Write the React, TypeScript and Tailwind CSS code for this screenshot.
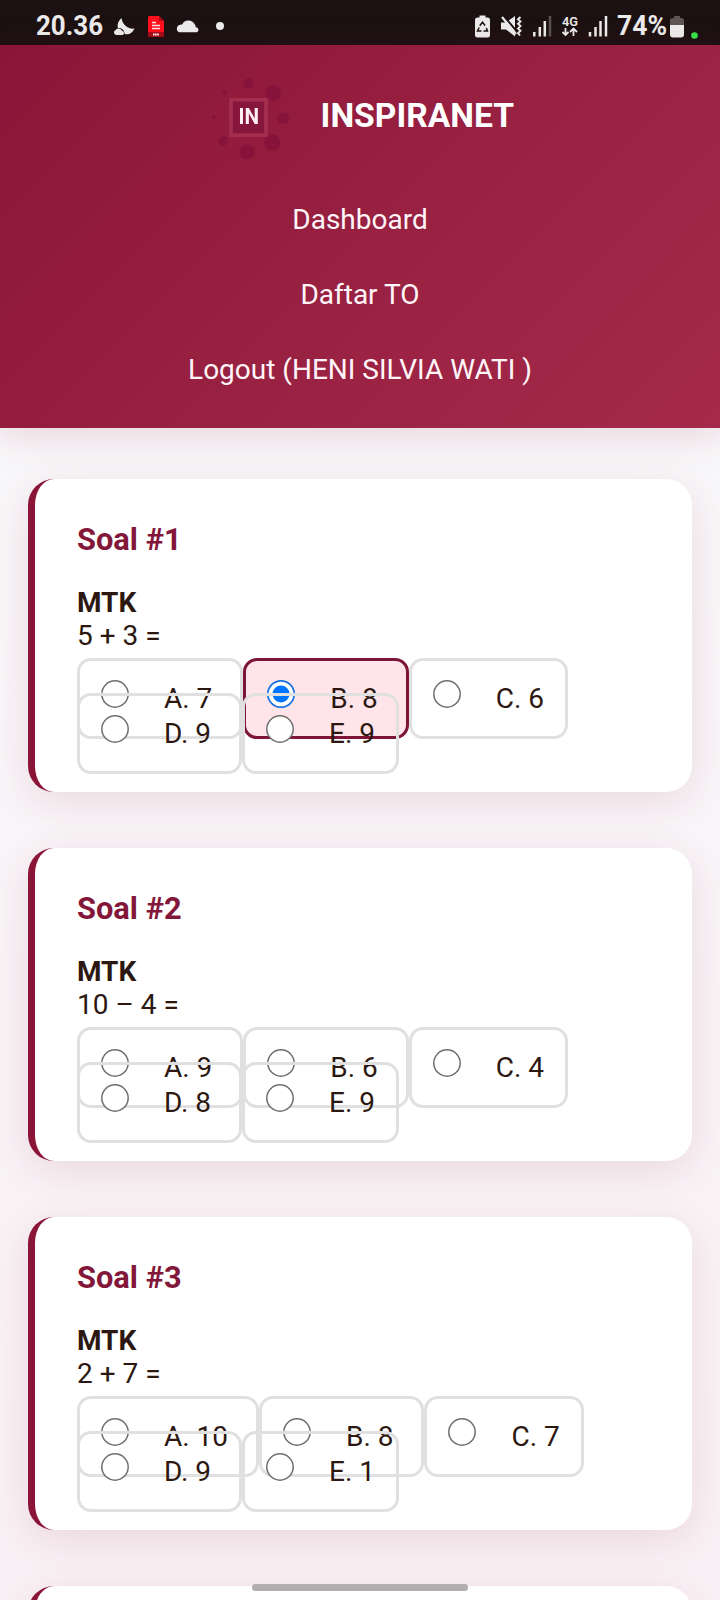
type Question = { id: number; text: string; options: string[]; selected?: number };

const questions: Question[] = [
  { id: 1, text: '5 + 3 =', options: ['A. 7', 'B. 8', 'C. 6', 'D. 9', 'E. 9'], selected: 1 },
  { id: 2, text: '10 – 4 =', options: ['A. 9', 'B. 6', 'C. 4', 'D. 8', 'E. 9'] },
  { id: 3, text: '2 + 7 =', options: ['A. 10', 'B. 8', 'C. 7', 'D. 9', 'E. 1'] },
];

function StatusBar() {
  return (
    <div className="flex h-[45px] shrink-0 items-start bg-[#1c1112] text-[#ececec]">
      <svg width="240" height="45" viewBox="0 0 240 45" className="shrink-0">
        <text x="36" y="35" fontSize="27" fontWeight="700" fill="#ececec" textLength="67" lengthAdjust="spacingAndGlyphs">20.36</text>
        <path d="M121.500 18 C118 21 117 25 118 28 C121.500 27.500 124.500 30 124.500 33.800 C128.500 35.500 132.500 33 134.500 28.500 C130 29.500 122.500 26 121.500 18Z" fill="#ececec" />
        <path d="M116 34.900 a2.600 2.600 0 0 1 -.3 -5 a3.600 3.600 0 0 1 6.200 .9 a2.200 2.200 0 0 1 1 4.100Z" fill="#ececec" />
        <path d="M149.500 16 h9.500 l5 5 v15 q0 1 -1 1 h-14 q-1 0 -1 -1 v-18.500 q0 -1.500 1.500 -1.500Z" fill="#fb101c" />
        <path d="M159 16 l5 5 h-5Z M148 32 h16 v4 q0 1 -1 1 h-14 q-1 0 -1 -1Z" fill="#a90d16" />
        <path d="M152 22.500 h4 M152 25.500 h8 M152 28.500 h8" stroke="#ffe1e1" strokeWidth="1.400" />
        <path d="M153 34.500 h6" stroke="#fff" strokeWidth="2" strokeDasharray="1.600 .5" />
        <path d="M179 32.300 a4 4 0 0 1 -.3 -7 q1.800 -1.200 3.500 -.8 a6.900 6.900 0 0 1 12.300 -.5 q1.300 1.500 1.300 3.200 a2.700 2.700 0 0 1 1.200 5.100Z" fill="#ececec" />
        <circle cx="220" cy="26" r="4" fill="#ececec" />
      </svg>
      <div className="flex-1" />
      <svg width="260" height="45" viewBox="0 0 260 45" className="shrink-0">
        <path d="M19.500 15.500 h6 v2 h2 q2.500 0 2.500 2.500 v15 q0 2.500 -2.500 2.500 h-10 q-2.500 0 -2.500 -2.500 v-15 q0 -2.500 2.500 -2.500 h2Z" fill="#ececec" />
        <path d="M19.700 25.700 l2.800 -3.500 l2.600 3.300 M26.300 28 l1.200 3 h-4 M21.500 31 h-4 l1.700 -3.500" fill="none" stroke="#1c1112" strokeWidth="1.500" />
        <path d="M41 22.500 h5 l9 -6.500 v20.500 l-9 -7 h-5Z" fill="#ececec" />
        <path d="M43 15 L58 33" stroke="#1c1112" strokeWidth="2" />
        <path d="M42 17 L56 34" stroke="#ececec" strokeWidth="2.200" />
        <path d="M60.500 17 l-2.500 2.200 l2.500 2.300 l-2.500 2.300 l2.500 2.300 l-2.500 2.300 l2.500 2.300 l-2.500 2.300 l2 2.500" fill="none" stroke="#ececec" strokeWidth="1.900" />
        <path d="M74.300 32 v4.500 M79.800 27 v9.500 M84.800 21 v15.500" stroke="#ececec" strokeWidth="2.500" />
        <path d="M90 16 v20.500" stroke="#5b5253" strokeWidth="2.500" />
        <text x="102" y="25.500" fontSize="13" fontWeight="600" fill="#ececec" textLength="16" lengthAdjust="spacingAndGlyphs">4G</text>
        <path d="M105.500 28 v7 M102.500 32 l3 3 l3 -3 M113.500 36 v-7 M110 32 l3.500 -3.500 l3.500 3.500" fill="none" stroke="#ececec" strokeWidth="1.800" />
        <path d="M130 32 v4.500 M135.500 27 v9.500 M140.500 21 v15.500 M146 16 v20.500" stroke="#ececec" strokeWidth="2.500" />
        <text x="157" y="35" fontSize="27" fontWeight="700" fill="#ececec" textLength="50" lengthAdjust="spacingAndGlyphs">74%</text>
        <path d="M214 16 h6 v2 h1.500 q2.500 0 2.500 2.500 v4.500 h-14 v-4.500 q0 -2.500 2.500 -2.500 h1.500Z" fill="#5f5556" />
        <path d="M210 25 h14 v9.500 q0 3 -3 3 h-8 q-3 0 -3 -3Z" fill="#ececec" />
        <circle cx="234.500" cy="35.500" r="3.300" fill="#36e84d" />
      </svg>
    </div>
  );
}

function Logo() {
  return (
    <svg width="84" height="84" viewBox="0 0 84 84">
      <defs>
        <filter id="soft" x="-10%" y="-10%" width="120%" height="120%">
          <feGaussianBlur stdDeviation="0.7" />
        </filter>
        <filter id="softText" x="-10%" y="-10%" width="120%" height="120%">
          <feGaussianBlur stdDeviation="0.6" />
        </filter>
      </defs>
      <g filter="url(#soft)">
        <g fill="#83133a" opacity="0.75">
          <circle cx="41.500" cy="7.500" r="5.300" />
          <circle cx="66.500" cy="18" r="8" />
          <circle cx="76.500" cy="43" r="6" />
          <circle cx="65.500" cy="68" r="8.500" />
          <circle cx="40" cy="77.500" r="7.800" />
          <circle cx="15.500" cy="66.500" r="4.800" />
          <circle cx="6" cy="42" r="2" />
          <circle cx="16.500" cy="17.500" r="2.500" />
        </g>
        <rect x="23.500" y="24.500" width="35.500" height="36" fill="#86143a" stroke="#a32e4e" strokeWidth="3.800" />
      </g>
      <text x="31" y="49.500" fontSize="22.500" fontWeight="700" fill="#fdeef3" textLength="21" lengthAdjust="spacingAndGlyphs" filter="url(#softText)">IN</text>
    </svg>
  );
}

function Radio({ checked }: { checked?: boolean }) {
  return (
    <svg width="28" height="28" viewBox="0 0 28 28" className="shrink-0">
      <circle cx="14" cy="14" r="13.200" fill="#fff" stroke={checked ? '#1672e0' : '#6f6f6f'} strokeWidth={checked ? 1.7 : 1.5} />
      {checked && <circle cx="14" cy="14" r="8.500" fill="#0075ff" />}
    </svg>
  );
}

function Option({ label, checked, last }: { label: string; checked?: boolean; last?: boolean }) {
  return (
    <label
      className={`relative flex h-[81px] items-start rounded-[14px] border-3 px-[21px] pt-[19px] whitespace-pre ${
        checked ? 'border-[#7d1538] bg-[#ffe5ea]' : 'border-[#e0e0e0]'
      }`}
    >
      <Radio checked={checked} />
      <span className="mt-[2px] ml-[35px] leading-[33px]">{last ? label : label + '\u00a0'}</span>
    </label>
  );
}

function Card({ q }: { q: Question }) {
  return (
    <section className="h-[313px] shrink-0 rounded-[26px] border-l-7 border-[#8b1538] bg-white pt-[43px] pl-[42px] shadow-[0_10px_42px_rgba(139,21,56,0.12)]">
      <h2 className="mb-[28px] text-[30.8px] leading-[36px] font-bold text-[#83173a]">Soal #{q.id}</h2>
      <p className="leading-[33px] font-bold">MTK</p>
      <p className="leading-[33px]">{q.text}</p>
      <div className="mt-[6px] flex">
        {q.options.slice(0, 3).map((o, i) => (
          <Option key={o} label={o} checked={q.selected === i} last={i === 2} />
        ))}
      </div>
      <div className="-mt-[46px] flex">
        {q.options.slice(3).map((o, i) => (
          <Option key={o} label={o} last={i === 1} />
        ))}
      </div>
    </section>
  );
}

export default function App() {
  return (
    <div className="relative flex h-[1600px] w-[720px] flex-col overflow-hidden bg-linear-to-b from-[#f8f9fb] to-[#f9f1f5] font-[Roboto,sans-serif] text-[28px] text-[#2c1810]">
      <StatusBar />
      <header className="flex h-[383px] shrink-0 flex-col items-center bg-linear-135 from-[#8b1538] to-[#a52a4a] pt-[30px] text-white shadow-[0_7px_35px_rgba(139,21,56,0.15)]">
        <div className="ml-[2px] flex h-[84px] w-[306px] items-center gap-[30px]">
          <Logo />
          <h1 className="-mt-[2px] text-[33.6px] leading-[40px] font-bold">INSPIRANET</h1>
        </div>
        <nav className="mt-[44px] flex flex-col items-center gap-[42px] leading-[33px] text-[#fff5f9]">
          <a>Dashboard</a>
          <a>Daftar TO</a>
          <a>Logout (HENI SILVIA WATI )</a>
        </nav>
      </header>
      <main className="flex flex-col gap-[56px] px-7 pt-[51px]">
        {questions.map((q) => (
          <Card key={q.id} q={q} />
        ))}
        <section className="h-[313px] shrink-0 rounded-[26px] border-l-7 border-[#8b1538] bg-white shadow-[0_10px_42px_rgba(139,21,56,0.12)]" />
      </main>
      <div className="absolute bottom-[9px] left-[252px] h-[7px] w-[216px] rounded-full bg-[#b0aeaf]" />
    </div>
  );
}
